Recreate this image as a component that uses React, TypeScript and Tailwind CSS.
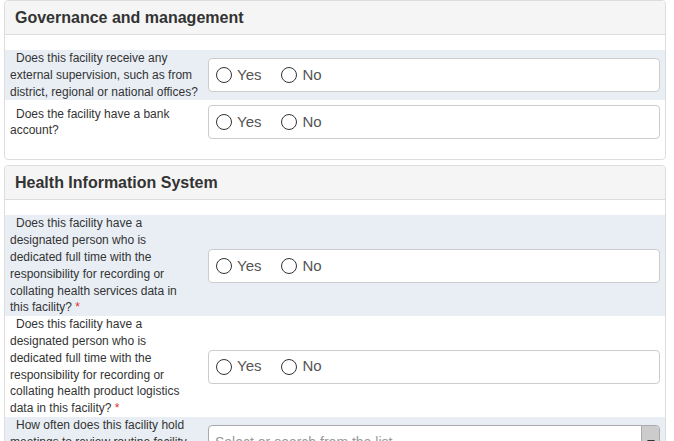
const Radio = ({ label }: { label: string }) => (
  <label className="flex items-center gap-[5px] text-[15px] text-[#555]">
    <span className="w-[16px] h-[16px] rounded-full border-[1.5px] border-[#333] bg-white" />
    {label}
  </label>
);

const YesNo = () => (
  <div className="flex items-center h-[34px] border border-[#ccc] rounded bg-white pl-[7px] gap-[20px]">
    <Radio label="Yes" />
    <Radio label="No" />
  </div>
);

const Select = () => (
  <div className="flex items-center h-[34px] border border-[#aaa] rounded bg-white overflow-hidden">
    <span className="flex-1 pl-[6px] text-[14px] text-[#999]">Select or search from the list</span>
    <span className="w-[18px] h-full bg-[#ccc] border-l border-[#aaa] flex items-center justify-center">
      <span className="block w-0 h-0 border-x-[4px] border-x-transparent border-t-[5px] border-t-[#333]" />
    </span>
  </div>
);

type Q = { text: string; required?: boolean; input?: 'yesno' | 'select' };

const Row = ({ q, shaded }: { q: Q; shaded: boolean }) => (
  <div className={`flex items-center ${shaded ? 'bg-[#e9eef5]' : 'bg-white'}`}>
    <div className="w-[203px] shrink-0 pl-[5px] pr-[10px] indent-[6px] text-[12px] leading-[16.8px] text-[#333]">
      {q.text}
      {q.required && <span className="text-[#e2302a]"> *</span>}
    </div>
    <div className="flex-1 py-[5px] pr-[5px]">
      {q.input === 'select' ? <Select /> : <YesNo />}
    </div>
  </div>
);

const Panel = ({ title, questions }: { title: string; questions: Q[] }) => (
  <div className="border border-[#ddd] rounded bg-white mb-[5px]">
    <div className="h-[34px] flex items-center px-[10px] bg-[#f5f5f5] border-b border-[#ddd] rounded-t">
      <h3 className="text-[16px] font-bold text-[#333]">{title}</h3>
    </div>
    <div className="pt-[15px] pb-[15px]">
      {questions.map((q, i) => (
        <Row key={i} q={q} shaded={i % 2 === 0} />
      ))}
    </div>
  </div>
);

export default function App() {
  return (
    <div className="h-[441px] overflow-hidden bg-white pl-1 pr-2 font-['Liberation_Sans',Arial,sans-serif]">
      <Panel
        title="Governance and management"
        questions={[
          { text: 'Does this facility receive any external supervision, such as from district, regional or national offices?' },
          { text: 'Does the facility have a bank account?' },
        ]}
      />
      <Panel
        title="Health Information System"
        questions={[
          {
            text: 'Does this facility have a designated person who is dedicated full time with the responsibility for recording or collating health services data in this facility?',
            required: true,
          },
          {
            text: 'Does this facility have a designated person who is dedicated full time with the responsibility for recording or collating health product logistics data in this facility?',
            required: true,
          },
          {
            text: 'How often does this facility hold meetings to review routine facility data?',
            input: 'select',
          },
        ]}
      />
    </div>
  );
}
